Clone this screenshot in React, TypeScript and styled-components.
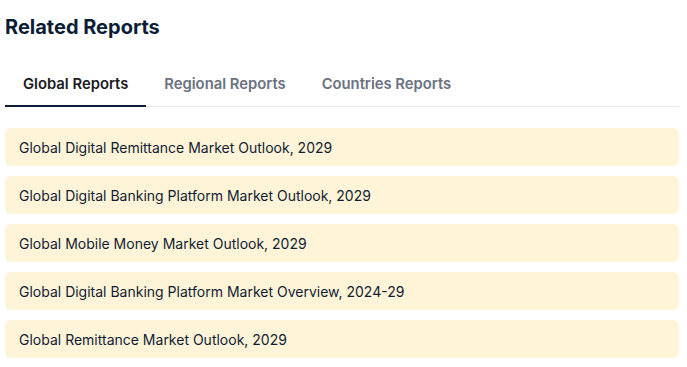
import React, { useState } from 'react';
import styled, { createGlobalStyle } from 'styled-components';

const GlobalStyle = createGlobalStyle`
    body {
        margin: 0;
        background: #fff;
        font-family: Inter, 'Noto Sans', sans-serif;
    }
`;

// Outer wrapper for the whole block
const Section = styled.section`
    width: 674px;
    padding: 13px 0 0 5px;
`;

const Heading = styled.h2`
    margin: 0;
    font-size: 20px;
    line-height: 28px;
    font-weight: 700;
    color: #0b1d36;
`;

// Tab strip with the thin grey rule under it
const TabBar = styled.div`
    display: flex;
    margin-top: 17px;
    border-bottom: 1px solid #e6e7ea;
`;

const Tab = styled.button<{ $active?: boolean }>`
    background: none;
    border: none;
    margin: 0 0 -1px;
    padding: 16px 18px 11px;
    font-family: inherit;
    font-size: 14.8px;
    line-height: 20px;
    font-weight: 600;
    color: ${(p) => (p.$active ? '#1b1b1f' : '#6b7280')};
    border-bottom: 2px solid ${(p) => (p.$active ? '#0b1d36' : 'transparent')};
    cursor: pointer;
`;

const List = styled.ul`
    list-style: none;
    margin: 21px 0 0;
    padding: 0;
    display: flex;
    flex-direction: column;
    gap: 10px;
`;

const Item = styled.li`
    height: 38px;
    display: flex;
    align-items: center;
    padding: 0 14px;
    border-radius: 6px;
    background: #fff4d8;
    font-size: 14px;
    color: #111c33;
`;

const tabs = ['Global Reports', 'Regional Reports', 'Countries Reports'];

const reports = [
    'Global Digital Remittance Market Outlook, 2029',
    'Global Digital Banking Platform Market Outlook, 2029',
    'Global Mobile Money Market Outlook, 2029',
    'Global Digital Banking Platform Market Overview, 2024-29',
    'Global Remittance Market Outlook, 2029',
];

const App = () => {
    const [active, setActive] = useState(0);

    return (
        <>
            <GlobalStyle />
            <Section>
                <Heading>Related Reports</Heading>
                <TabBar>
                    {tabs.map((t, i) => (
                        <Tab key={t} $active={i === active} onClick={() => setActive(i)}>
                            {t}
                        </Tab>
                    ))}
                </TabBar>
                <List>
                    {reports.map((r) => (
                        <Item key={r}>{r}</Item>
                    ))}
                </List>
            </Section>
        </>
    );
};

export default App;
